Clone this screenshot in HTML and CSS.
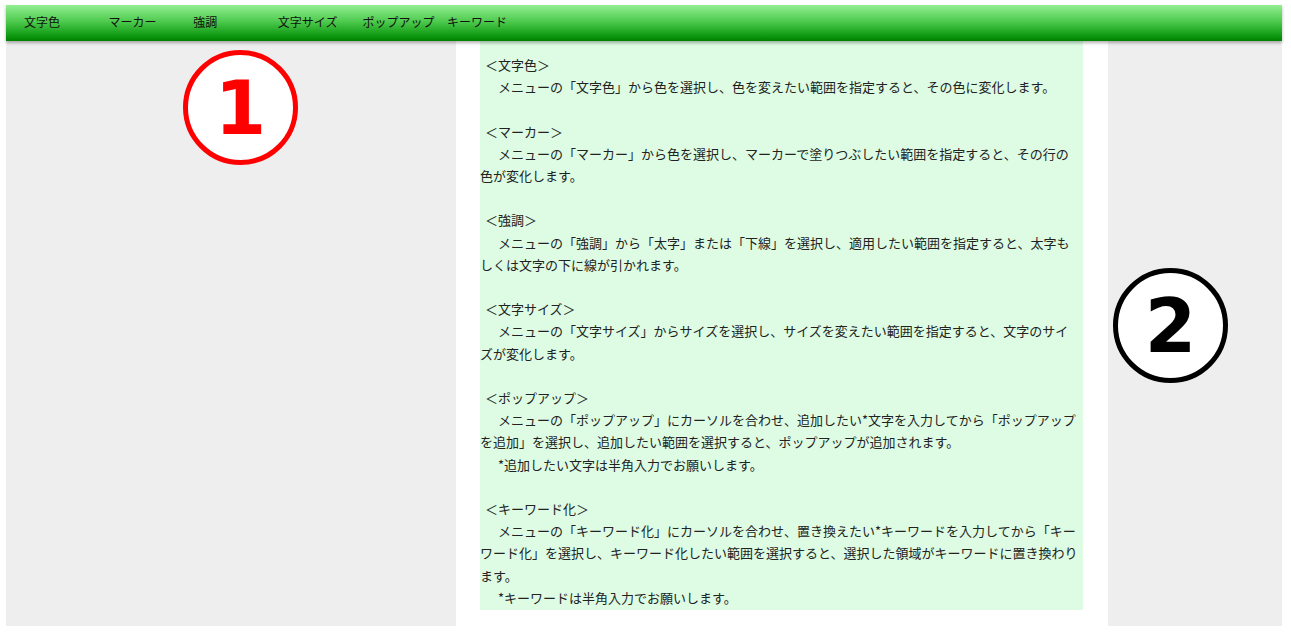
FILE: index.html
```html
<!DOCTYPE html>
<html lang="ja">
<head>
<meta charset="utf-8">
<title>メニュー説明</title>
<link rel="stylesheet" href="styles.css">
</head>
<body>
<div class="page">
  <nav class="menubar">
    <span class="menu-item">文字色</span>
    <span class="menu-item">マーカー</span>
    <span class="menu-item">強調</span>
    <span class="menu-item">文字サイズ</span>
    <span class="menu-item">ポップアップ</span>
    <span class="menu-item">キーワード</span>
  </nav>
  <div class="layout">
    <div class="side"></div>
    <main class="column">
      <div class="help">
        <p class="head">＜文字色＞</p>
        <p class="body">メニューの「文字色」から色を選択し、色を変えたい範囲を指定すると、その色に変化します。</p>
        <p class="blank">&nbsp;</p>
        <p class="head">＜マーカー＞</p>
        <p class="body">メニューの「マーカー」から色を選択し、マーカーで塗りつぶしたい範囲を指定すると、その行の<br>色が変化します。</p>
        <p class="blank">&nbsp;</p>
        <p class="head">＜強調＞</p>
        <p class="body">メニューの「強調」から「太字」または「下線」を選択し、適用したい範囲を指定すると、太字も<br>しくは文字の下に線が引かれます。</p>
        <p class="blank">&nbsp;</p>
        <p class="head">＜文字サイズ＞</p>
        <p class="body">メニューの「文字サイズ」からサイズを選択し、サイズを変えたい範囲を指定すると、文字のサイ<br>ズが変化します。</p>
        <p class="blank">&nbsp;</p>
        <p class="head">＜ポップアップ＞</p>
        <p class="body">メニューの「ポップアップ」にカーソルを合わせ、追加したい*文字を入力してから「ポップアップ<br>を追加」を選択し、追加したい範囲を選択すると、ポップアップが追加されます。</p>
        <p class="body">*追加したい文字は半角入力でお願いします。</p>
        <p class="blank">&nbsp;</p>
        <p class="head">＜キーワード化＞</p>
        <p class="body">メニューの「キーワード化」にカーソルを合わせ、置き換えたい*キーワードを入力してから「キー<br>ワード化」を選択し、キーワード化したい範囲を選択すると、選択した領域がキーワードに置き換わり<br>ます。</p>
        <p class="body">*キーワードは半角入力でお願いします。</p>
      </div>
    </main>
    <div class="side"></div>
  </div>
  <div class="marker marker-one">1</div>
  <div class="marker marker-two">2</div>
</div>
</body>
</html>
```
FILE: styles.css
```css
html, body {
  margin: 0;
  padding: 0;
  background: #fff;
}

body {
  font-family: "Noto Sans CJK JP", "Noto Sans", sans-serif;
  color: #222;
}

.page {
  position: relative;
  margin: 5px 0 0 6px;
  width: 1276px;
  height: 621px;
  background: #eeeeee;
}

.menubar {
  position: relative;
  z-index: 2;
  display: flex;
  height: 36px;
  padding-left: 18px;
  background: linear-gradient(to bottom, #92ee92 0%, #4fcb4f 45%, #0f9a12 85%, #008000 100%);
  box-shadow: 0 2px 3px rgba(0, 0, 0, 0.3);
}

.menu-item {
  width: 84.6px;
  font-size: 12px;
  line-height: 34px;
  color: #111;
}

.layout {
  display: grid;
  grid-template-columns: 450px 652px 1fr;
  height: 585px;
}

.column {
  background: #fff;
  padding: 0 25px 0 24px;
}

.help {
  background: #ddfce3;
  padding: 13px 0 1px 0;
  font-size: 13px;
  line-height: 22.2px;
  white-space: nowrap;
}

.help p {
  margin: 0;
}

.head {
  padding-left: 5px;
}

.body {
  text-indent: 18px;
}

.marker {
  position: absolute;
  z-index: 3;
  box-sizing: border-box;
  width: 115px;
  height: 115px;
  border-radius: 50%;
  background: #fff;
  display: flex;
  align-items: center;
  justify-content: center;
  font-family: "DejaVu Sans", sans-serif;
  font-weight: bold;
  font-size: 74px;
  line-height: 1;
}

.marker-one {
  left: 177px;
  top: 45px;
  border: 5px solid #ff0000;
  color: #ff0000;
}

.marker-two {
  left: 1107px;
  top: 263px;
  border: 5px solid #000;
  color: #000;
}
```
